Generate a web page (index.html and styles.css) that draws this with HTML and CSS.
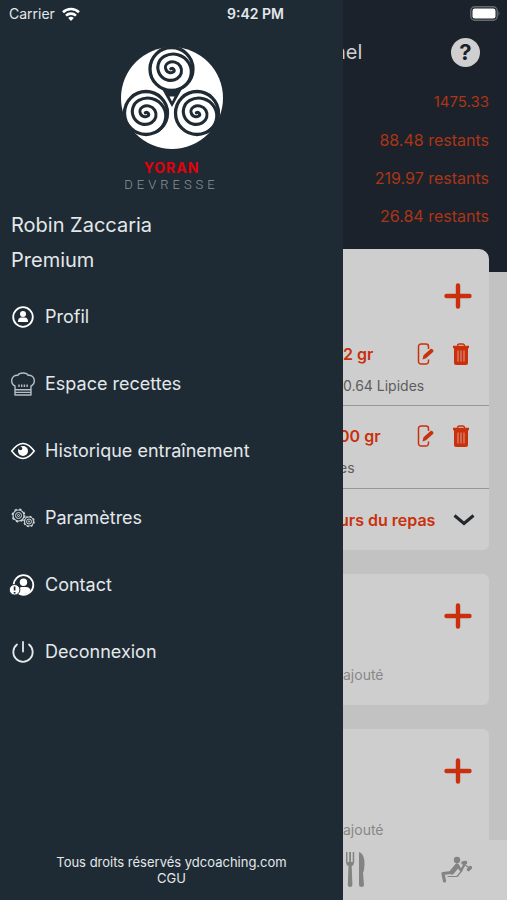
FILE: index.html
```
<!DOCTYPE html>
<html lang="fr">
  <head>
    <meta charset="UTF-8" />
    <meta name="viewport" content="width=device-width, initial-scale=1.0" />
    <title>YD Coaching</title>
    <link rel="stylesheet" href="styles.css" />
  </head>
  <body>
    <svg class="sprite" aria-hidden="true">
      <symbol id="spiral" viewBox="-24 -24 48 48">
        <circle r="22" fill="#fff" />
        <path
          d="M-.5 .5a2 2 0 0 1 4 -.5a5.200 5.200 0 0 1 -10.400 0a9 9 0 0 1 18 0a12.800 12.800 0 0 1 -25.600 0a18 18 0 0 1 36 0"
          fill="none" stroke="#1f2b34" stroke-width="3.100" stroke-linecap="round" transform="rotate(60)" />
        <circle r="21.500" fill="none" stroke="#1f2b34" stroke-width="3.300" />
      </symbol>
      <symbol id="plus" viewBox="0 0 28 28">
        <path d="M2.500 14h23M14 3.500v21" stroke="currentColor" stroke-width="4.400" stroke-linecap="round" />
      </symbol>
      <symbol id="edit" viewBox="0 0 18 22">
        <path d="M11.500 6V3.500a2.500 2.500 0 0 0-2.500-2.500H4a2.500 2.500 0 0 0-2.500 2.500v15A2.500 2.500 0 0 0 4 21h5a2.500 2.500 0 0 0 2.500-2.500v-2" fill="none" stroke="currentColor" stroke-width="1.500" />
        <path d="M5.500 16.500l1-4.200 7-6.300q1-.8 2 .2l.6.700q.9 1-.1 2l-7 6.300z" fill="currentColor" />
      </symbol>
      <symbol id="trash" viewBox="0 0 18 22">
        <path d="M5.500 3q0-2 1.800-2h3.400q1.800 0 1.800 2" fill="none" stroke="currentColor" stroke-width="1.300" />
        <path d="M1 2.800h16v2.400H1zM2 5h14v15q0 2-2 2H4q-2 0-2-2z" fill="currentColor" />
        <path d="M6 7.500v11M9 7.500v11M12 7.500v11" stroke="#d98a78" stroke-width="1.200" />
      </symbol>
    </svg>

    <div class="screen">
      <aside class="drawer">
        <div class="status">
          <span>Carrier</span>
          <svg class="wifi" viewBox="0 0 18 14" fill="none" stroke="#fff" stroke-width="2.600">
            <path d="M1 5.300a11.500 11.500 0 0 1 16 0M4 8.600a7.300 7.300 0 0 1 10 0" />
            <path d="M6.200 11a4 4 0 0 1 5.600 0L9 14z" fill="#fff" stroke="none" />
          </svg>
          <b class="time">9:42 PM</b>
        </div>

        <div class="brand">
          <svg class="logo" viewBox="-52 -52 104 104">
            <circle r="51" fill="#fff" />
            <path d="M-10 -9h20L0 9z" fill="#1f2b34" />
            <use href="#spiral" x="-24" y="-24" width="48" height="48" transform="translate(-.5 -29)" />
            <use href="#spiral" x="-24" y="-24" width="48" height="48" transform="translate(-26 15)" />
            <use href="#spiral" x="-24" y="-24" width="48" height="48" transform="translate(25 15)" />
            <path d="M-2.500 -1.500h5l-2.500 5z" fill="#fff" />
          </svg>
          <strong class="brand-first">YORAN</strong>
          <span class="brand-last">DEVRESSE</span>
        </div>

        <div class="user">
          <p>Robin Zaccaria</p>
          <p>Premium</p>
        </div>

        <nav class="menu">
          <a href="#profil">
            <svg viewBox="0 0 24 24">
              <circle cx="12" cy="12" r="9.800" fill="none" stroke="#fff" stroke-width="1.800" />
              <circle cx="12" cy="9" r="3" fill="#fff" />
              <path d="M7 17q-.3-4.500 3.500-4.500h3q3.800 0 3.500 4.500z" fill="#fff" />
            </svg>
            Profil
          </a>
          <a href="#recettes">
            <svg viewBox="0 0 24 24" fill="none" stroke="#b5bec4" stroke-width="1.400" stroke-linejoin="round">
              <path d="M4 23v-9C1.500 13 .7 11 .7 8.500.7 5 3.500 3 7 3.300 8 .3 16 .3 17 3.300c3.500-.3 6.300 1.700 6.300 5.200 0 2.500-.8 4.500-3.300 5.500v9zM4 17.800h16M4 20.400h16" />
              <path d="M8 12.500v2.500M10.700 12.500v2.500M13.400 12.500v2.500M16.100 12.500v2.500" />
            </svg>
            Espace recettes
          </a>
          <a href="#historique">
            <svg viewBox="0 0 24 24">
              <path d="M.8 12Q12-3 23.200 12 12 27 .8 12z" fill="none" stroke="#fff" stroke-width="1.600" />
              <circle cx="12" cy="12" r="5" fill="#fff" />
              <circle cx="9.500" cy="9.500" r="1.800" fill="#1f2b34" />
            </svg>
            Historique entraînement
          </a>
          <a href="#parametres">
            <svg viewBox="0 0 24 24" fill="none" stroke="#cfd6da">
              <circle cx="7.500" cy="9.500" r="5.500" stroke-width="1.200" />
              <circle cx="7.500" cy="9.500" r="6.300" stroke-width="1.300" stroke-dasharray="2.400 2.550" />
              <circle cx="7.500" cy="9.500" r="3" />
              <circle cx="7.500" cy="9.500" r="1" />
              <circle cx="18" cy="15.500" r="4.500" stroke-width="1.200" />
              <circle cx="18" cy="15.500" r="5.200" stroke-width="1.200" stroke-dasharray="2 2.080" />
              <circle cx="18" cy="15.500" r="2.500" />
              <circle cx="18" cy="15.500" r=".7" />
            </svg>
            Paramètres
          </a>
          <a href="#contact">
            <svg viewBox="0 0 24 24">
              <circle cx="12.500" cy="12" r="9.800" fill="none" stroke="#fff" stroke-width="1.800" />
              <circle cx="12.500" cy="9.200" r="3.700" fill="#fff" />
              <path d="M8 21q-2-7 3-7h4q4 0 4.500 4-4 4-11.500 3z" fill="#fff" />
              <circle cx="3.600" cy="16.800" r="5.300" fill="#fff" stroke="#1f2b34" />
              <path d="M3.600 13.500v4M3.600 19v1.500" stroke="#1f2b34" stroke-width="1.700" />
            </svg>
            Contact
          </a>
          <a href="#deconnexion">
            <svg viewBox="0 0 24 24" fill="none" stroke="#e3e8eb" stroke-width="1.800" stroke-linecap="round">
              <path d="M12 2v9.500M6 4.500a9.700 9.700 0 1 0 12 0" />
            </svg>
            Deconnexion
          </a>
        </nav>

        <footer class="legal">
          <p>Tous droits réservés ydcoaching.com</p>
          <a href="#cgu">CGU</a>
        </footer>
      </aside>

      <main class="page">
        <header class="top">
          <div class="status battery-row">
            <svg class="battery" viewBox="0 0 31 15">
              <rect x=".8" y=".8" width="26.400" height="13.400" rx="4" fill="#1b222b" stroke="#666b70" stroke-width="1.400" />
              <rect x="2.500" y="2.500" width="23" height="10" rx="2.200" fill="#fff" />
              <path d="M28.500 5q2 2.500 0 5z" fill="#666b70" />
            </svg>
          </div>
          <div class="title-row">
            <h1>nel</h1>
            <button class="help" aria-label="Aide">?</button>
          </div>
          <ul class="totals">
            <li class="kcal">1475.33</li>
            <li>88.48 restants</li>
            <li>219.97 restants</li>
            <li>26.84 restants</li>
          </ul>
        </header>

        <div class="meals">
          <section class="card first">
            <button class="add" aria-label="Ajouter"><svg><use href="#plus" /></svg></button>
            <div class="food">
              <div class="food-row">
                <strong>2 gr</strong>
                <button aria-label="Modifier"><svg><use href="#edit" /></svg></button>
                <button aria-label="Supprimer"><svg><use href="#trash" /></svg></button>
              </div>
              <p>0.64 Lipides</p>
            </div>
            <div class="food">
              <div class="food-row">
                <strong class="cut">00 gr</strong>
                <button aria-label="Modifier"><svg><use href="#edit" /></svg></button>
                <button aria-label="Supprimer"><svg><use href="#trash" /></svg></button>
              </div>
              <p class="cut">es</p>
            </div>
            <button class="values">
              <span class="cut">urs du repas</span>
              <svg viewBox="0 0 22 12" fill="none" stroke="#22282e" stroke-width="3">
                <path d="M1.500 1.500L11 9.500l9.500-8" />
              </svg>
            </button>
          </section>

          <section class="card">
            <button class="add" aria-label="Ajouter"><svg><use href="#plus" /></svg></button>
            <p class="empty">ajouté</p>
          </section>

          <section class="card">
            <button class="add" aria-label="Ajouter"><svg><use href="#plus" /></svg></button>
            <p class="empty">ajouté</p>
          </section>
        </div>

        <nav class="tabs">
          <a href="#nutrition" aria-label="Nutrition">
            <svg viewBox="0 0 22 38" fill="#838383">
              <path d="M1 1h1.500v10h1.700V1h1.800v10h1.700V1h1.500v10q0 3-2.500 4l.7 19q0 2-2.300 2t-2.300-2L3.500 15Q1 14 1 11z" />
              <path d="M14 1q6 2 5.500 13-.2 5-1.500 8l1 12q0 2-2.500 2t-2.500-2z" />
            </svg>
          </a>
          <a href="#sport" aria-label="Sport">
            <svg viewBox="0 0 32 28">
              <g fill="none" stroke="#838383" stroke-linecap="round" stroke-linejoin="round">
                <path d="M17 10l-5 6" stroke-width="5" />
                <path d="M11 16.500L3 17.500l1.500 7.500" stroke-width="3.200" />
                <path d="M18 10l3 4.500 3-5" stroke-width="2.400" />
                <path d="M8 20.500h9l5-6" stroke-width="1.200" />
                <path d="M23 7l2.500-.5M28.500 13.500l2-2" stroke-width="3.400" />
                <path d="M24 8l6 4.500" stroke-width="1.200" />
              </g>
              <circle cx="17" cy="4" r="3.200" fill="#838383" />
            </svg>
          </a>
        </nav>
      </main>
    </div>
  </body>
</html>
```
FILE: styles.css
```
* {
  box-sizing: border-box;
}

body {
  margin: 0;
  font-family: Inter, "Liberation Sans", sans-serif;
  background: #c2c2c2;
}

h1,
p,
ul {
  margin: 0;
  padding: 0;
}

a {
  color: inherit;
  text-decoration: none;
}

button {
  padding: 0;
  border: none;
  background: transparent;
  color: inherit;
  font: inherit;
  cursor: pointer;
}

svg {
  display: block;
}

.sprite {
  position: absolute;
  width: 0;
  height: 0;
}

.screen {
  display: grid;
  grid-template-columns: 343fr 164fr;
  height: 100vh;
  overflow: hidden;
}

/* side menu */
.drawer {
  display: flex;
  flex-direction: column;
  background: #1f2b34;
  color: #e3e8eb;
}

.status {
  display: flex;
  align-items: center;
  height: 27px;
  padding-left: 9px;
  font-size: 14px;
}

.wifi {
  width: 18px;
  height: 14px;
  margin-left: 7px;
}

.time {
  margin-left: auto;
  margin-right: 59px;
  font-weight: 600;
}

.brand {
  display: flex;
  flex-direction: column;
  align-items: center;
  padding-top: 19px;
}

.logo {
  width: 104px;
  height: 104px;
}

.brand-first {
  margin-top: 10px;
  font-size: 14px;
  line-height: 16px;
  letter-spacing: 1px;
  color: #e3000b;
}

.brand-last {
  font-family: Roboto, sans-serif;
  font-weight: 300;
  font-size: 13px;
  line-height: 17px;
  letter-spacing: 4px;
  color: #8a949b;
}

.user {
  padding: 15px 11px 0;
  font-size: 20px;
  line-height: 35px;
}

.menu {
  padding-top: 5px;
}

.menu a {
  display: flex;
  align-items: center;
  gap: 10px;
  height: 67px;
  padding-left: 11px;
  font-size: 18px;
}

.menu svg {
  width: 24px;
  height: 24px;
  overflow: visible;
}

.legal {
  margin-top: auto;
  padding-bottom: 14px;
  text-align: center;
  font-size: 13px;
  line-height: 16px;
}

/* page behind the menu */
.page {
  display: flex;
  flex-direction: column;
  min-width: 0;
  overflow: hidden;
  color: #c9300c;
}

.top {
  height: 272px;
  flex: none;
  background: #1b222b;
}

.battery-row {
  justify-content: flex-end;
  padding-right: 6px;
}

.battery {
  width: 31px;
  height: 15px;
}

/* labels that slide under the menu */
.cut {
  margin-left: -4px;
}

.title-row {
  display: flex;
  align-items: center;
  justify-content: space-between;
  height: 50px;
  padding-right: 27px;
  color: #cfcfcf;
}

.title-row h1 {
  margin-left: -9px;
  font-size: 20px;
  font-weight: 400;
}

.help {
  width: 29px;
  height: 29px;
  border-radius: 50%;
  background: #cfcfcf;
  color: #1b222b;
  font-size: 22px;
  font-weight: 700;
  line-height: 29px;
}

.totals {
  padding: 6px 18px 0 0;
  list-style: none;
  text-align: right;
  font-size: 16px;
  line-height: 38px;
  color: #ac3515;
}

.totals .kcal {
  font-size: 15px;
}

.meals {
  flex: 1;
  min-height: 0;
  margin-top: -23px;
  padding-right: 18px;
}

.card {
  height: 131px;
  margin-bottom: 24px;
  border-radius: 0 6px 6px 0;
  background: #cecece;
}

.first {
  height: auto;
  border-radius: 0 10px 6px 0;
}

.add {
  display: block;
  margin-left: auto;
  padding: 28px 17px 0 0;
}

.first .add {
  padding-top: 33px;
}

.add svg {
  width: 28px;
  height: 28px;
}

.food {
  height: 83px;
  padding-top: 19px;
  border-bottom: 1px solid #979797;
}

.first .add + .food {
  height: 96px;
  padding-top: 33px;
}

.food-row {
  display: flex;
  align-items: center;
  gap: 17px;
  height: 22px;
  padding-right: 19px;
  font-size: 16px;
}

.food-row strong {
  flex: 1;
  font-weight: 600;
}

.food-row svg {
  width: 18px;
  height: 22px;
}

.food p {
  margin-top: 11px;
  font-size: 14px;
  line-height: 20px;
  color: #5d5d5d;
}

.values {
  display: flex;
  align-items: center;
  justify-content: space-between;
  width: 100%;
  height: 61px;
  padding-right: 14px;
  font-size: 16px;
  font-weight: 600;
}

.values svg {
  width: 22px;
  height: 12px;
}

.empty {
  margin-top: 35px;
  font-size: 14px;
  line-height: 20px;
  color: #878787;
}

.tabs {
  display: flex;
  justify-content: space-between;
  align-items: center;
  flex: none;
  height: 60px;
  padding: 0 35px 0 2px;
  background: #cdcdcd;
  position: relative;
}

.tabs svg {
  width: 32px;
  height: 28px;
}

.tabs a:first-child svg {
  width: 22px;
  height: 38px;
}
```
